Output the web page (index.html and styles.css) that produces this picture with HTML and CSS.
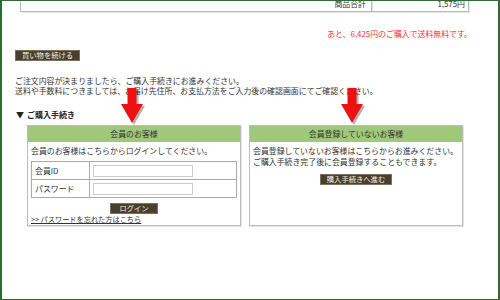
FILE: index.html
```html
<!DOCTYPE html>
<html>
<head>
    <title>ご購入手続き</title>
    <link rel="stylesheet" href="styles.css">
</head>
<body>
    <div class="page">
        <table class="summary">
            <tr>
                <td class="summary-label">商品合計</td>
                <td class="summary-price">1,575円</td>
            </tr>
        </table>

        <p class="free-shipping">あと、6,425円のご購入で送料無料です。</p>

        <div class="continue-row">
            <button class="dark-button">買い物を続ける</button>
        </div>

        <p class="notice">
            ご注文内容が決まりましたら、ご購入手続きにお進みください。<br>
            送料や手数料につきましては、お届け先住所、お支払方法をご入力後の確認画面にてご確認ください。
        </p>

        <h3 class="section-title"><span class="tri">▼</span>ご購入手続き</h3>

        <div class="boxes">
            <div class="box">
                <div class="box-head">会員のお客様</div>
                <div class="box-body">
                    <p class="box-text">会員のお客様はこちらからログインしてください。</p>
                    <table class="login-table">
                        <tr>
                            <td class="login-label">会員ID</td>
                            <td><input type="text" class="login-input"></td>
                        </tr>
                        <tr>
                            <td class="login-label">パスワード</td>
                            <td><input type="password" class="login-input"></td>
                        </tr>
                    </table>
                    <div class="center-row">
                        <button class="dark-button login-button">ログイン</button>
                    </div>
                    <a href="#" class="forgot-link">&gt;&gt; パスワードを忘れた方はこちら</a>
                </div>
            </div>
            <div class="box">
                <div class="box-head">会員登録していないお客様</div>
                <div class="box-body">
                    <p class="box-text guest-text">会員登録していないお客様はこちらからお進みください。<br>ご購入手続き完了後に会員登録することもできます。</p>
                    <div class="center-row">
                        <button class="dark-button">購入手続きへ進む</button>
                    </div>
                </div>
            </div>
        </div>

        <!-- red pointer arrows drawn over the page -->
        <svg class="arrow arrow-left" width="30" height="40" viewBox="0 0 30 40">
            <polygon class="arrow-shadow" points="8.5,2 17.5,2 17.5,18 24,18 13,37 2,18 8.5,18"/>
            <polygon class="arrow-fill" points="6.5,0 15.5,0 15.5,16 22,16 11,35 0,16 6.5,16"/>
        </svg>
        <svg class="arrow arrow-right" width="30" height="40" viewBox="0 0 30 40">
            <polygon class="arrow-shadow" points="8.5,2 17.5,2 17.5,18 24,18 13,37 2,18 8.5,18"/>
            <polygon class="arrow-fill" points="6.5,0 15.5,0 15.5,16 22,16 11,35 0,16 6.5,16"/>
        </svg>
    </div>
</body>
</html>
```

FILE: styles.css
```css
body {
    margin: 0;
    padding: 0;
    background-color: #fff;
    font-family: "Noto Sans CJK JP", "Liberation Sans", sans-serif;
    font-size: 7.9px;
    color: #333;
}
p {
    margin: 0;
}
.page {
    position: relative;
    width: 500px;
    height: 300px;
    box-sizing: border-box;
    border-style: solid;
    border-color: #2f6a2f;
    border-width: 1px 2px;
    overflow: hidden;
}
.summary {
    margin: -5px 0 0 18px;
    width: 449px;
    border-collapse: collapse;
    table-layout: fixed;
}
.summary td {
    border: 1px solid #bbb;
    height: 14px;
    padding: 0;
    text-align: right;
    line-height: 10px;
    box-shadow: 1px 1px 0 #e4e4e4;
}
.summary-label {
    width: 345px;
    padding-right: 5px !important;
}
.summary-price {
    padding-right: 3px !important;
}
.free-shipping {
    margin-top: 17px;
    padding-right: 26px;
    text-align: right;
    color: #ff3333;
    line-height: 10px;
}
.continue-row {
    margin: 10px 0 0 13px;
    height: 12px;
}
.dark-button {
    display: inline-block;
    margin: 0;
    padding: 0 6px;
    height: 11px;
    border: 1px solid #7b705c;
    background-color: #4a3f2c;
    color: #f4f0e6;
    font-family: inherit;
    font-size: 7.3px;
    line-height: 9px;
    cursor: pointer;
}
.notice {
    margin: 15px 0 0 13px;
    line-height: 10px;
}
.section-title {
    margin: 14px 0 0 14px;
    font-size: 8px;
    font-weight: bold;
    line-height: 10px;
    color: #222;
}
.tri {
    display: inline-block;
    width: 11px;
    font-size: 8px;
}
.boxes {
    display: flex;
    gap: 8px;
    margin: 5px 0 0 25px;
}
.box {
    width: 214px;
    height: 101px;
    box-sizing: border-box;
    border: 1px solid #bdbdbd;
    box-shadow: 1px 1px 0 #e2e2e2;
}
.box-head {
    height: 16px;
    background-color: #9fc87c;
    text-align: center;
    line-height: 16px;
    color: #333;
}
.box-body {
    padding: 4px 3px 0 3px;
}
.box-text {
    line-height: 10px;
}
.guest-text {
    line-height: 11px;
    margin-top: -1px;
}
.login-table {
    margin-top: 5px;
    width: 206px;
    border-collapse: collapse;
}
.login-table td {
    border: 1px solid #aaa;
    height: 17px;
    padding: 0;
}
.login-label {
    width: 54px;
    padding-left: 3px !important;
}
.login-input {
    display: block;
    margin-left: 3px;
    width: 100px;
    height: 12px;
    box-sizing: border-box;
    border: 1px solid #ccc;
    padding: 0;
}
.center-row {
    margin-top: 4px;
    text-align: center;
    height: 12px;
}
.login-button {
    padding: 0 8px;
}
.forgot-link {
    display: block;
    margin-top: 1px;
    font-size: 7.2px;
    line-height: 9px;
    color: #333;
    text-decoration: underline;
}
.guest-text + .center-row {
    margin-top: 6px;
}
.arrow {
    position: absolute;
    top: 87px;
}
.arrow-left {
    left: 119px;
}
.arrow-right {
    left: 339px;
}
.arrow-shadow {
    fill: rgba(0, 0, 0, 0.3);
}
.arrow-fill {
    fill: #ee1111;
}
```
